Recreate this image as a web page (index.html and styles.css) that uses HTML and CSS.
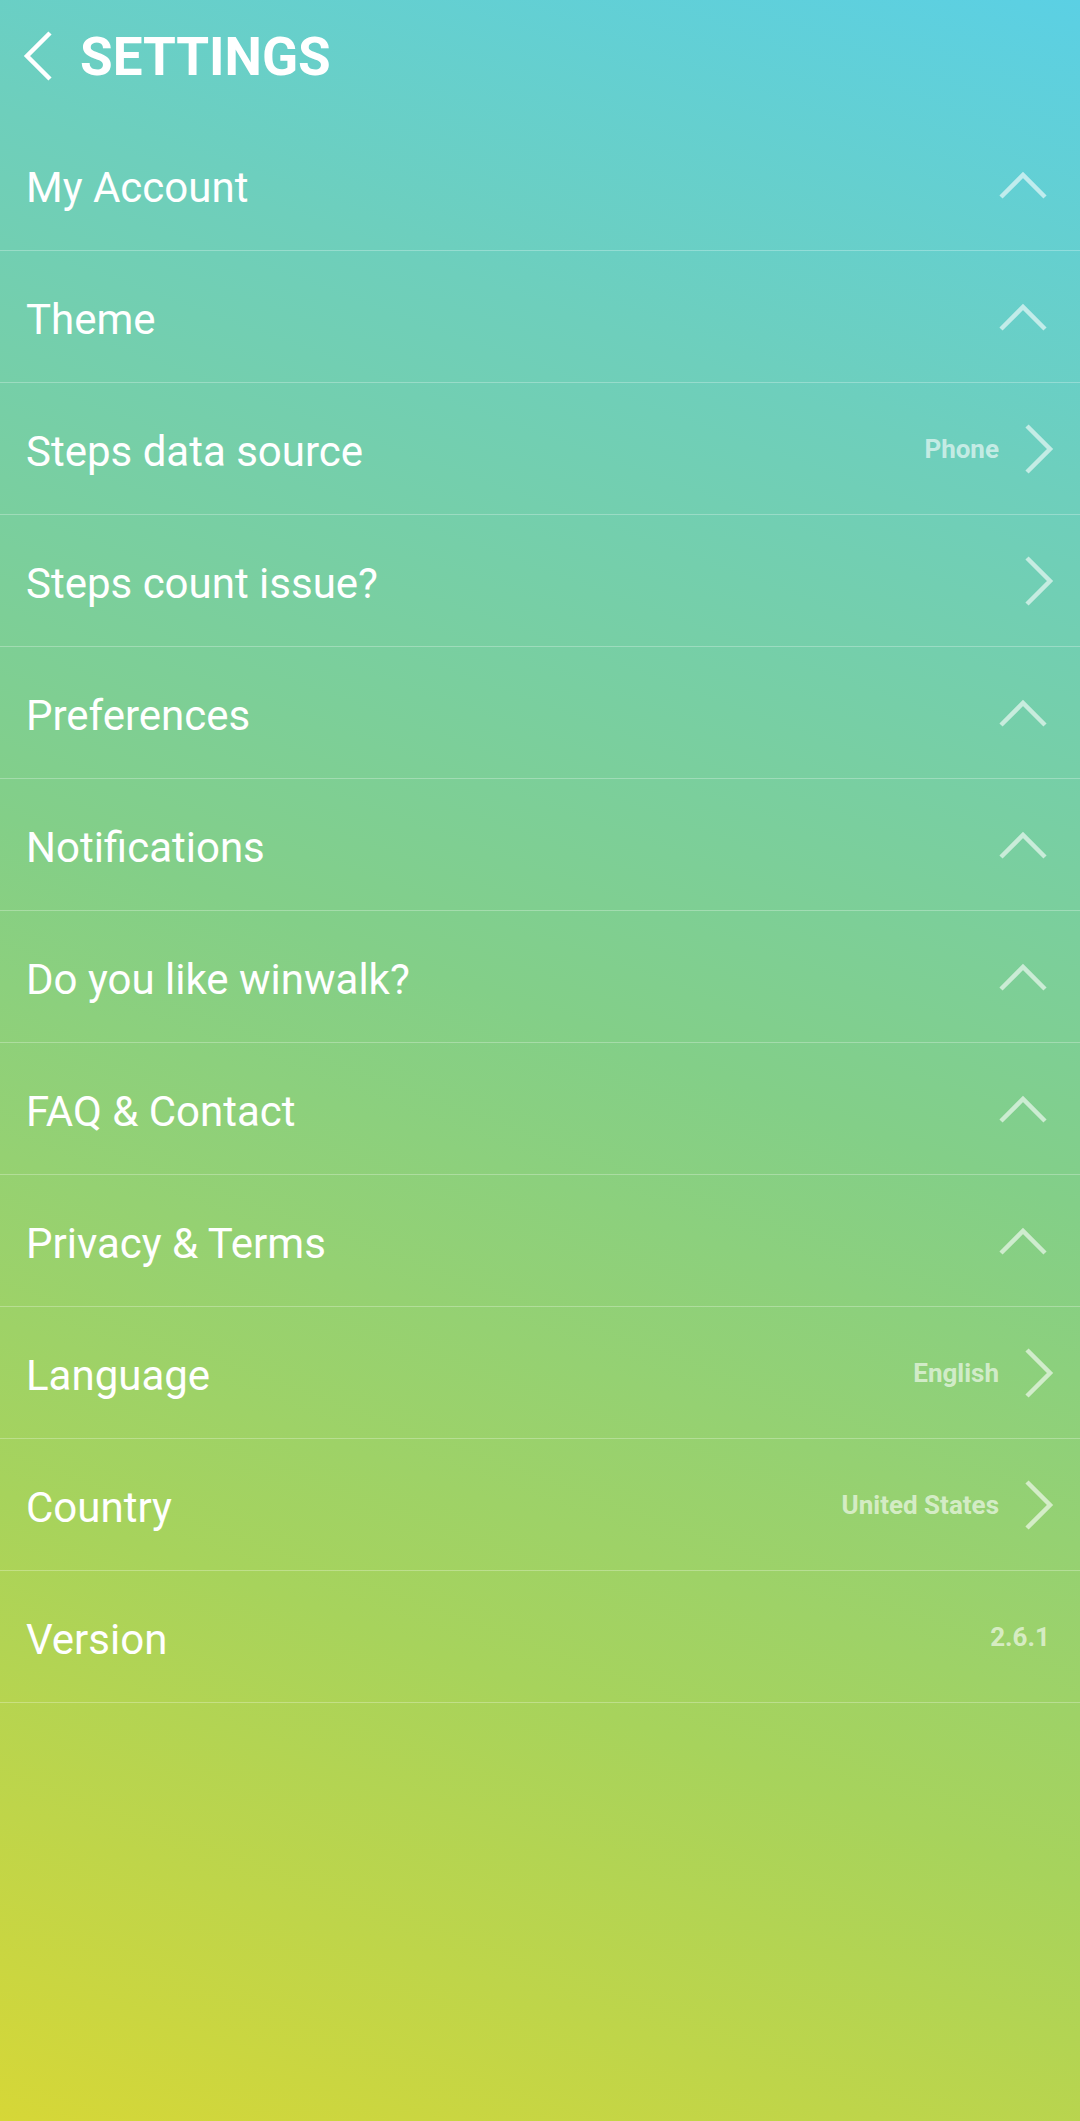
FILE: index.html
```html
<!DOCTYPE html>
<html lang="en">
<head>
    <meta charset="UTF-8">
    <meta name="viewport" content="width=device-width, initial-scale=1.0">
    <title>Settings - winwalk</title>
    <link rel="stylesheet" href="styles.css">
</head>
<body>
    <div class="settings-page">
        <div class="header">
            <svg class="back-icon" width="32" height="52" viewBox="0 0 32 52">
                <path d="M27 3 L4 26 L27 49" fill="none" stroke="#ffffff" stroke-width="4.5"/>
            </svg>
            <h1>SETTINGS</h1>
        </div>

        <ul class="settings-list">
            <li class="row">
                <span class="label">My Account</span>
                <svg class="icon-up" width="56" height="32" viewBox="0 0 56 32"><path d="M3 27 L25 5 L47 27"/></svg>
            </li>
            <li class="row">
                <span class="label">Theme</span>
                <svg class="icon-up" width="56" height="32" viewBox="0 0 56 32"><path d="M3 27 L25 5 L47 27"/></svg>
            </li>
            <li class="row">
                <span class="label">Steps data source</span>
                <span class="value">Phone</span>
                <svg class="icon-right" width="32" height="52" viewBox="0 0 32 52"><path d="M5 3 L28 26 L5 49"/></svg>
            </li>
            <li class="row">
                <span class="label">Steps count issue?</span>
                <svg class="icon-right" width="32" height="52" viewBox="0 0 32 52"><path d="M5 3 L28 26 L5 49"/></svg>
            </li>
            <li class="row">
                <span class="label">Preferences</span>
                <svg class="icon-up" width="56" height="32" viewBox="0 0 56 32"><path d="M3 27 L25 5 L47 27"/></svg>
            </li>
            <li class="row">
                <span class="label">Notifications</span>
                <svg class="icon-up" width="56" height="32" viewBox="0 0 56 32"><path d="M3 27 L25 5 L47 27"/></svg>
            </li>
            <li class="row">
                <span class="label">Do you like winwalk?</span>
                <svg class="icon-up" width="56" height="32" viewBox="0 0 56 32"><path d="M3 27 L25 5 L47 27"/></svg>
            </li>
            <li class="row">
                <span class="label">FAQ &amp; Contact</span>
                <svg class="icon-up" width="56" height="32" viewBox="0 0 56 32"><path d="M3 27 L25 5 L47 27"/></svg>
            </li>
            <li class="row">
                <span class="label">Privacy &amp; Terms</span>
                <svg class="icon-up" width="56" height="32" viewBox="0 0 56 32"><path d="M3 27 L25 5 L47 27"/></svg>
            </li>
            <li class="row">
                <span class="label">Language</span>
                <span class="value">English</span>
                <svg class="icon-right" width="32" height="52" viewBox="0 0 32 52"><path d="M5 3 L28 26 L5 49"/></svg>
            </li>
            <li class="row">
                <span class="label">Country</span>
                <span class="value">United States</span>
                <svg class="icon-right" width="32" height="52" viewBox="0 0 32 52"><path d="M5 3 L28 26 L5 49"/></svg>
            </li>
            <li class="row">
                <span class="label">Version</span>
                <span class="value version">2.6.1</span>
            </li>
        </ul>
    </div>
</body>
</html>
```

FILE: styles.css
```css
html, body {
    height: 100%;
}
body {
    font-family: 'Roboto', 'Liberation Sans', sans-serif;
    margin: 0;
    padding: 0;
    color: #ffffff;
    background: linear-gradient(200deg, #5bd0e4 0%, #6ecfbc 20%, #83cf88 48%, #a7d35c 75%, #d6d737 100%);
    min-height: 2121px;
}
.settings-page {
    display: flex;
    flex-direction: column;
}
.header {
    height: 119px;
    display: flex;
    align-items: flex-start;
    padding: 30px 0 0 23px;
    box-sizing: border-box;
}
.back-icon {
    flex-shrink: 0;
}
h1 {
    margin: 0 0 0 25px;
    font-size: 53px;
    font-weight: 700;
    line-height: 54px;
    letter-spacing: 0;
}
.settings-list {
    list-style: none;
    margin: 0;
    padding: 0;
}
.row {
    height: 131px;
    display: flex;
    align-items: center;
    padding: 0 26px;
    border-bottom: 1px solid rgba(255, 255, 255, 0.28);
}
.label {
    flex: 1;
    font-size: 42px;
    padding-top: 5px;
}
.value {
    font-size: 26px;
    font-weight: 700;
    color: rgba(255, 255, 255, 0.62);
    margin-right: 23px;
}
.value.version {
    margin-right: 4px;
}
.row svg path {
    fill: none;
    stroke: rgba(255, 255, 255, 0.6);
    stroke-width: 4.5;
}
.icon-up {
    margin-left: 20px;
    margin-top: 3px;
}
.icon-right {
    margin-left: 0;
}
```
